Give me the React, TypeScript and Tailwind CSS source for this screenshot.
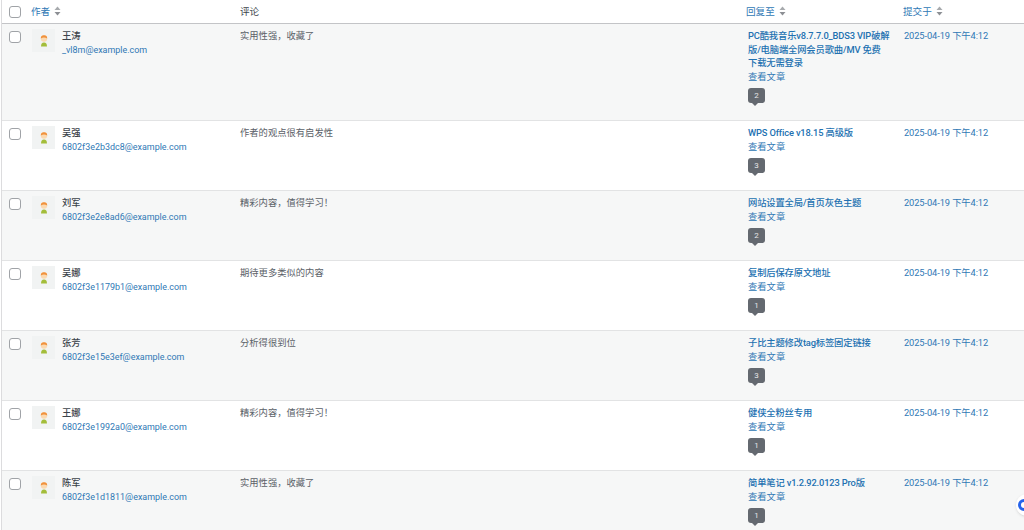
import React from 'react';

const rows = [
  { name: '王涛', email: '_vl8m@example.com', text: '实用性强，收藏了', title: 'PC酷我音乐v8.7.7.0_BDS3 VIP破解版/电脑端全网会员歌曲/MV 免费\n下载无需登录', count: 2 },
  { name: '吴强', email: '6802f3e2b3dc8@example.com', text: '作者的观点很有启发性', title: 'WPS Office v18.15 高级版', count: 3 },
  { name: '刘军', email: '6802f3e2e8ad6@example.com', text: '精彩内容，值得学习！', title: '网站设置全局/首页灰色主题', count: 2 },
  { name: '吴娜', email: '6802f3e1179b1@example.com', text: '期待更多类似的内容', title: '复制后保存原文地址', count: 1 },
  { name: '张芳', email: '6802f3e15e3ef@example.com', text: '分析得很到位', title: '子比主题修改tag标签固定链接', count: 3 },
  { name: '王娜', email: '6802f3e1992a0@example.com', text: '精彩内容，值得学习！', title: '健侠全粉丝专用', count: 1 },
  { name: '陈军', email: '6802f3e1d1811@example.com', text: '实用性强，收藏了', title: '简单笔记 v1.2.92.0123 Pro版', count: 1 },
];

const Checkbox = () => (
  <span className="block w-[12px] h-[12px] rounded-[3px] border border-[#a0a3a7] bg-white" />
);

const SortArrows = () => (
  <svg width="7" height="10" viewBox="0 0 7 10" className="inline-block ml-1 align-[-1px]">
    <path d="M3.5 0.5 L6.5 4 H0.5 Z" fill="#a7aaad" />
    <path d="M3.5 9.5 L6.5 6 H0.5 Z" fill="#8c8f94" />
  </svg>
);

const Avatar = () => (
  <div className="w-[23px] h-[23px] bg-[#f1f3f3] flex items-center justify-center shrink-0">
    <svg width="10" height="14" viewBox="0 0 10 14">
      <circle cx="5" cy="4.5" r="3.2" fill="#fbd9b0" />
      <path d="M1.8 4.5 A3.2 3.2 0 0 1 8.2 4.5 Q5 2.4 1.8 4.5 Z" fill="#f0913c" />
      <path d="M2 12.5 Q2 8.5 5 8.5 Q8 8.5 8 12.5 Z" fill="#a3bd3a" />
    </svg>
  </div>
);

const Bubble = ({ count }: { count: number }) => (
  <div className="relative w-[17px] h-[15px] mt-[5px] rounded-[3px] bg-[#646970] text-[#e6e7e8] text-[8px] flex items-center justify-center">
    {count}
    <span className="absolute left-[4px] -bottom-[3px] w-0 h-0 border-t-[3px] border-t-[#646970] border-l-[3px] border-l-transparent border-r-[3px] border-r-transparent" />
  </div>
);

export default function App() {
  return (
    <div className="w-[1024px] h-[530px] overflow-hidden bg-white text-[9.3px] leading-[13.5px] text-[#5b6168] relative font-['Roboto','Noto_Sans_CJK_SC',sans-serif]">
      <div className="ml-px border-l border-[#dcdcde]">
        {/* header */}
        <div className="flex h-[24px] items-center border-b border-[#c3c4c7] text-[9.6px]">
          <div className="w-[22px] pl-[7px]"><Checkbox /></div>
          <div className="w-[208px] pl-[7px] text-[#2f78b5]">作者<SortArrows /></div>
          <div className="w-[506px] pl-[8px] text-[#3c434a]">评论</div>
          <div className="w-[157px] pl-[8px] text-[#2f78b5]">回复至<SortArrows /></div>
          <div className="pl-[8px] text-[#2f78b5]">提交于<SortArrows /></div>
        </div>
        {rows.map((row, i) => (
          <div key={i} className={`flex border-b border-[#e2e3e4] ${i === 0 ? 'h-[97px]' : 'h-[70px]'} ${i % 2 === 0 ? 'bg-[#f6f7f7]' : 'bg-white'}`}>
            <div className="w-[22px] pl-[7px] pt-[7px]"><Checkbox /></div>
            <div className="w-[208px] pl-[8px] pt-[5px] flex gap-[7px]">
              <Avatar />
              <div>
                <div className="text-[#3c434a] font-medium">{row.name}</div>
                <div className="text-[#2f78b5] text-[8.95px] pt-px">{row.email}</div>
              </div>
            </div>
            <div className="w-[506px] pl-[8px] pt-[5px]">{row.text}</div>
            <div className="w-[157px] pl-[10px] pr-[5px] pt-[5px]">
              <div className="text-[#2271b1] font-medium tracking-[-0.15px] whitespace-pre-line">{row.title}</div>
              <div className="text-[#2f78b5]">查看文章</div>
              <Bubble count={row.count} />
            </div>
            <div className="pl-[9px] pt-[5px] text-[#2f78b5] tracking-[-0.1px]">2025-04-19 下午4:12</div>
          </div>
        ))}
      </div>
      <div className="absolute left-[1016px] top-[494px] w-[22px] h-[22px] rounded-full bg-white shadow flex items-center justify-center">
        <span className="w-[12px] h-[12px] rounded-full border-[3px] border-[#2563eb] -ml-[6px]" />
      </div>
    </div>
  );
}
